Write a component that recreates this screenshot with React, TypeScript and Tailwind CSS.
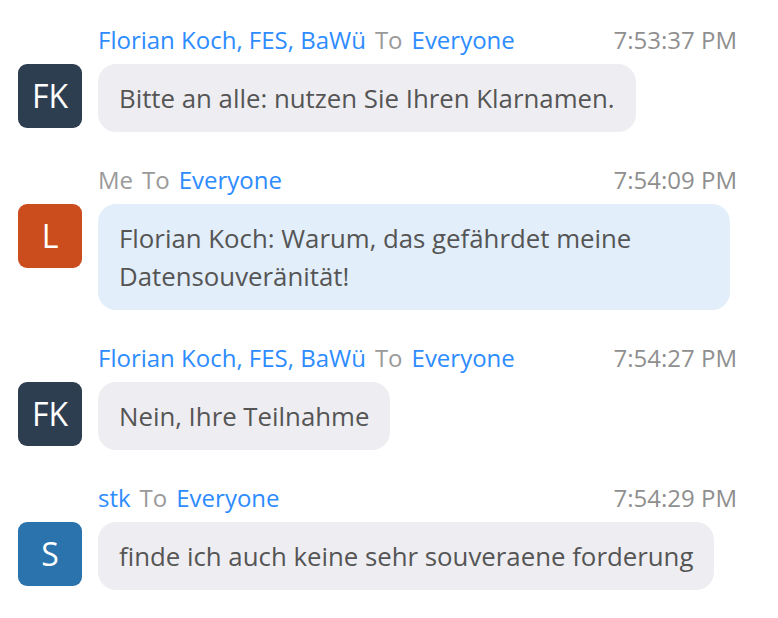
import React from "react";

type Message = {
  id: number;
  sender: string;
  isMe?: boolean;
  time: string;
  text: string;
  initials: string;
  avatarColor: string;
  bubble: string;
};

const messages: Message[] = [
  {
    id: 1,
    sender: "Florian Koch, FES, BaWü",
    time: "7:53:37 PM",
    text: "Bitte an alle: nutzen Sie Ihren Klarnamen.",
    initials: "FK",
    avatarColor: "bg-[#2e3e51]",
    bubble: "bg-[#eeeef2]",
  },
  {
    id: 2,
    sender: "Me",
    isMe: true,
    time: "7:54:09 PM",
    text: "Florian Koch: Warum, das gefährdet meine Datensouveränität!",
    initials: "L",
    avatarColor: "bg-[#cb4c1c]",
    bubble: "bg-[#e2eefa]",
  },
  {
    id: 3,
    sender: "Florian Koch, FES, BaWü",
    time: "7:54:27 PM",
    text: "Nein, Ihre Teilnahme",
    initials: "FK",
    avatarColor: "bg-[#2e3e51]",
    bubble: "bg-[#eeeef2]",
  },
  {
    id: 4,
    sender: "stk",
    time: "7:54:29 PM",
    text: "finde ich auch keine sehr souveraene forderung",
    initials: "S",
    avatarColor: "bg-[#2a73ad]",
    bubble: "bg-[#eeeef2]",
  },
];

const ChatItem: React.FC<{ msg: Message }> = ({ msg }) => {
  return (
    <div className="flex flex-col">
      {/* cabecera: remitente, destinatario, hora */}
      <div className="flex items-center justify-between pl-[80px] pr-[41px] h-[32px] text-[24px] leading-[32px]">
        <div className="flex items-center gap-[9px]">
          <span className={msg.isMe ? "text-[#9a9a9a]" : "text-[#2d8cff]"}>{msg.sender}</span>
          <span className="text-[#9a9a9a]">To</span>
          <span className="text-[#2d8cff]">Everyone</span>
        </div>
        <span className="text-[#8f8f8f]">{msg.time}</span>
      </div>

      <div className="flex items-start gap-[16px] mt-[8px]">
        <div
          className={`${msg.avatarColor} w-[64px] h-[64px] rounded-[9px] shrink-0 flex items-center justify-center text-white text-[32px]`}
        >
          {msg.initials}
        </div>
        <div
          className={`${msg.bubble} max-w-[632px] rounded-[18px] px-[21px] py-[15px] text-[25.8px] leading-[38px] text-[#555555]`}
        >
          {msg.text}
        </div>
      </div>
    </div>
  );
};

export default function App() {
  return (
    <div
      className="w-[778px] h-[618px] bg-white pl-[18px] pt-[24px] flex flex-col gap-[32px]"
      style={{ fontFamily: '"Open Sans", "Noto Sans", sans-serif' }}
    >
      {messages.map((m) => (
        <ChatItem key={m.id} msg={m} />
      ))}
    </div>
  );
}
